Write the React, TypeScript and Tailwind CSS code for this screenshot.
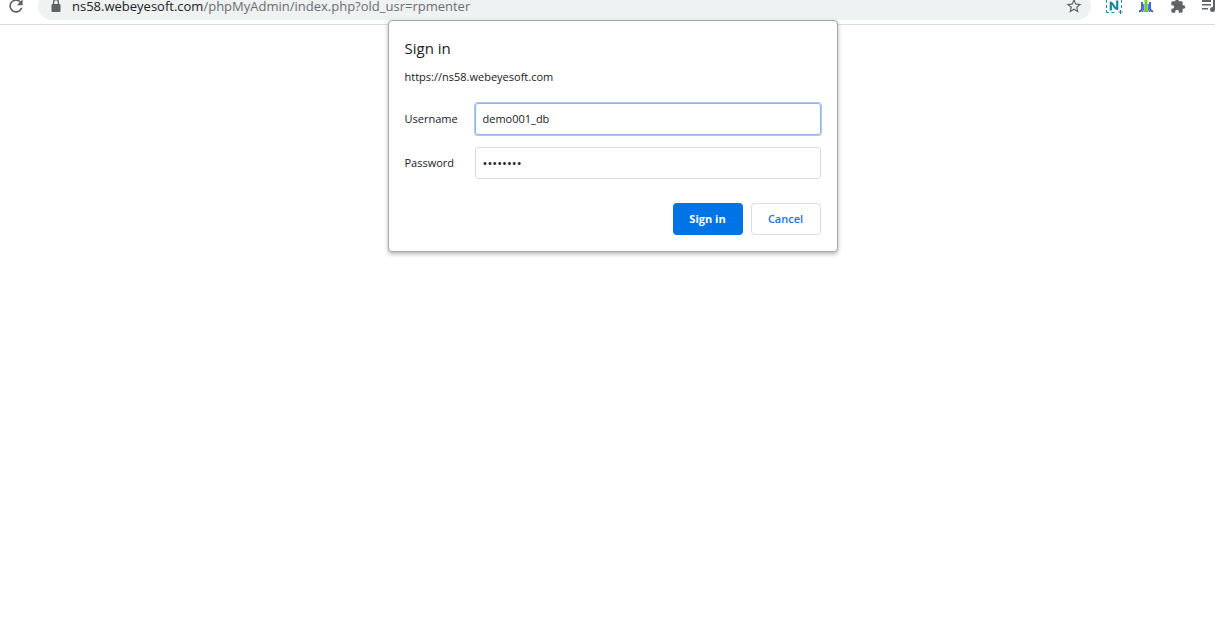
import React from "react";

function Toolbar() {
  return (
    <header className="flex h-[25px] items-end border-b border-[#d9dbde] bg-white pb-1">
      <button type="button" aria-label="Reload" className="flex h-7 w-[38px] shrink-0 items-center pl-[6px]">
        <svg width="20" height="20" viewBox="0 0 24 24" fill="#5f6368" aria-hidden="true">
          <path d="M17.65 6.35C16.2 4.9 14.21 4 12 4c-4.42 0-7.99 3.58-7.99 8s3.57 8 7.99 8c3.73 0 6.84-2.55 7.73-6h-2.08c-.82 2.33-3.04 4-5.65 4-3.31 0-6-2.69-6-6s2.69-6 6-6c1.66 0 3.14.69 4.22 1.78L13 11h7V4l-2.35 2.35z" />
        </svg>
      </button>
      <div className="flex h-7 min-w-0 flex-1 items-center rounded-full bg-[#eef2f3] pr-2 pl-3">
        <svg width="12" height="14" viewBox="0 0 12 14" fill="#5f6368" className="shrink-0" aria-hidden="true">
          <path fillRule="evenodd" d="M6 0a3 3 0 0 0-3 3v2H2.500a1 1 0 0 0-1 1v6a1 1 0 0 0 1 1h7a1 1 0 0 0 1-1V6a1 1 0 0 0-1-1H9V3a3 3 0 0 0-3-3zm0 1.300A1.700 1.700 0 0 1 7.700 3v2H4.300V3A1.700 1.700 0 0 1 6 1.300z" />
        </svg>
        <p className="min-w-0 flex-1 pl-[10px] text-[13px] leading-3 whitespace-nowrap text-[#6a6d71]">
          <span className="text-[#202124]">ns58.webeyesoft.com</span>/phpMyAdmin/index.php?old_usr=rpmenter
        </p>
        <button type="button" aria-label="Bookmark this page">
          <svg width="18" height="18" viewBox="0 0 24 24" fill="#5f6368" aria-hidden="true">
            <path d="M22 9.240l-7.190-.62L12 2 9.190 8.630 2 9.240l5.460 4.730L5.820 21 12 17.270 18.180 21l-1.630-7.030L22 9.240zM12 15.400l-3.760 2.270 1-4.280-3.320-2.880 4.380-.38L12 6.100l1.710 4.040 4.380.38-3.320 2.880 1 4.280L12 15.400z" />
          </svg>
        </button>
      </div>
      <div className="flex h-7 shrink-0 items-center gap-4 pl-[14px]">
        <button type="button" aria-label="Nimbus capture">
          <svg width="17" height="18" viewBox="0 0 17 18" className="overflow-visible" aria-hidden="true">
            <path d="M1.500 3v2.500M1.500 8v3M1.500 13v2.500H4M6.500 15.500h3M16.500 3v2.500M16.500 8v3" fill="none" stroke="#16899a" />
            <path d="M15.500 13v4M13.500 15h4" stroke="#16899a" />
            <path d="M5.800 13.500V5.500c2.500 0 3.200 6.500 6.400 6.500V3.500" fill="none" stroke="#16899a" strokeWidth="2.200" />
          </svg>
        </button>
        <button type="button" aria-label="Fountain extension">
          <svg width="16" height="18" viewBox="0 0 16 18" aria-hidden="true">
            <path d="M8 2c1 0 1.500.8 1.500 2v8l1.500 3H5l1.500-3V4C6.500 2.800 7 2 8 2z" fill="#6fce2c" />
            <path d="M4 5v6.500c0 1.500-1 2.500-3 3.200M12 5v6.500c0 1.500 1 2.500 3 3.200" fill="none" stroke="#3059d4" strokeWidth="1.800" />
            <path d="M5.700 7v5l-1.500 3M10.300 7v5l1.500 3" fill="none" stroke="#3059d4" strokeWidth="1" />
          </svg>
        </button>
        <button type="button" aria-label="Extensions">
          <svg width="16" height="16" viewBox="0 0 24 24" fill="#5f6368" aria-hidden="true">
            <path d="M20.500 11H19V7c0-1.100-.9-2-2-2h-4V3.500a2.500 2.500 0 0 0-5 0V5H4c-1.100 0-2 .9-2 2v3.800h1.500a2.700 2.700 0 0 1 0 5.400H2V20c0 1.100.9 2 2 2h3.800v-1.500a2.700 2.700 0 0 1 5.400 0V22H17c1.100 0 2-.9 2-2v-4h1.500a2.500 2.500 0 0 0 0-5z" />
          </svg>
        </button>
        <button type="button" aria-label="Media controls">
          <svg width="13" height="16" viewBox="0 0 13 16" fill="#5f6368" aria-hidden="true">
            <path d="M0 2h9v2H0zM0 6h9v1.500H0zM0 10h6v1.500H0zM11 2h2v10h-2z" />
            <circle cx="10.500" cy="11.500" r="2.500" />
          </svg>
        </button>
      </div>
    </header>
  );
}

function SignInDialog() {
  return (
    <form
      role="dialog"
      aria-labelledby="dialog-title"
      onSubmit={(event) => event.preventDefault()}
      className="absolute top-5 left-1/2 ml-[-220px] w-[450px] rounded-[4px] border border-[#a8a8a8] bg-white px-4 pt-[15px] pb-4 shadow-[0_2px_4px_rgba(0,0,0,0.3)]"
    >
      <h1 id="dialog-title" className="text-[15px] leading-6">Sign in</h1>
      <p className="mt-[5px] text-[11px] leading-6">https://ns58.webeyesoft.com</p>
      <div className="mt-[14px] grid grid-cols-[70px_1fr] items-center gap-y-3 text-[11px]">
        <label htmlFor="username">Username</label>
        <input
          id="username"
          type="text"
          defaultValue="demo001_db"
          className="h-8 min-w-0 rounded-[3px] border border-[#8db5e8] px-[7px] pb-[2px] ring-1 ring-[#a9cbf4] outline-none"
        />
        <label htmlFor="password">Password</label>
        <input
          id="password"
          type="password"
          defaultValue="12345678"
          className="h-8 min-w-0 rounded-[3px] border border-[#dadce0] px-[7px] text-[13px] outline-none"
        />
      </div>
      <div className="mt-6 flex justify-end gap-2 text-[11px]">
        <button type="submit" className="h-8 w-[70px] rounded-[4px] bg-[#0073e6] font-bold text-white">Sign in</button>
        <button type="button" className="h-8 w-[70px] rounded-[4px] border border-[#dadce0] font-semibold text-[#1a73e8]">Cancel</button>
      </div>
    </form>
  );
}

export default function App() {
  return (
    <div className="relative min-h-screen bg-white font-['Open_Sans','Noto_Sans',sans-serif] text-[#202124]">
      <Toolbar />
      <main>
        <SignInDialog />
      </main>
    </div>
  );
}
